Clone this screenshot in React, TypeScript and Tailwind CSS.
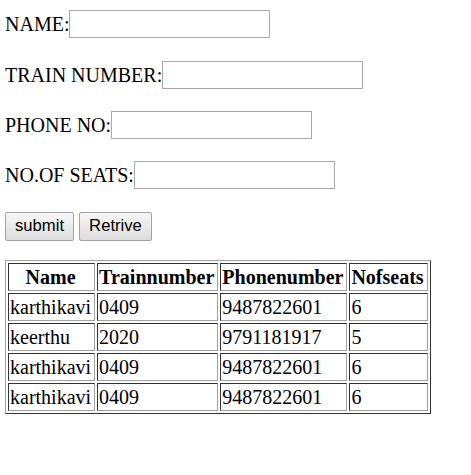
import React from "react";

const rows = [
  ["karthikavi", "0409", "9487822601", "6"],
  ["keerthu", "2020", "9791181917", "5"],
  ["karthikavi", "0409", "9487822601", "6"],
  ["karthikavi", "0409", "9487822601", "6"],
];

function Field({ label, className }: { label: string; className?: string }) {
  return (
    <div className={"flex items-center h-[28px] " + (className ?? "")}>
      <span className="leading-[23px]">{label}</span>
      <input
        type="text"
        className="w-[201px] h-[28px] border border-[#a9a9a9] bg-white outline-none"
      />
    </div>
  );
}

export default function App() {
  const serif = { fontFamily: '"Liberation Serif", "Times New Roman", serif' };
  return (
    <div
      className="bg-white text-black text-[20px] pl-[5px] pt-[10px] w-[471px] h-[475px]"
      style={serif}
    >
      <Field label="NAME:" />
      <Field label="TRAIN NUMBER:" className="mt-[23px]" />
      <Field label="PHONE NO:" className="mt-[22px]" />
      <Field label="NO.OF SEATS:" className="mt-[22px]" />
      <div className="flex gap-[5px] mt-[23px]">
        <button className="w-[69px] h-[29px] border border-[#a3a3a3] rounded-[2px] bg-linear-to-b from-[#f7f7f7] to-[#dddddd] text-[16.67px] font-['Liberation_Sans',Arial,sans-serif] leading-none">
          submit
        </button>
        <button className="w-[73px] h-[29px] border border-[#a3a3a3] rounded-[2px] bg-linear-to-b from-[#f7f7f7] to-[#dddddd] text-[16.67px] font-['Liberation_Sans',Arial,sans-serif] leading-none">
          Retrive
        </button>
      </div>
      <table className="mt-[19px] border-separate border-spacing-[2px] border-t border-l border-t-[#a0a0a0] border-l-[#a0a0a0] border-r border-b border-r-[#333333] border-b-[#333333]">
        <thead>
          <tr>
            {["Name", "Trainnumber", "Phonenumber", "Nofseats"].map((h) => (
              <th
                key={h}
                className="font-bold text-center leading-[24px] pl-[1px] pr-[3px] py-[1px] border-t border-l border-t-[#333333] border-l-[#333333] border-r border-b border-r-[#a0a0a0] border-b-[#a0a0a0]"
              >
                {h}
              </th>
            ))}
          </tr>
        </thead>
        <tbody>
          {rows.map((r, i) => (
            <tr key={i}>
              {r.map((c, j) => (
                <td
                  key={j}
                  className="text-left leading-[24px] pl-[1px] pr-[3px] py-[1px] border-t border-l border-t-[#333333] border-l-[#333333] border-r border-b border-r-[#a0a0a0] border-b-[#a0a0a0]"
                >
                  {c}
                </td>
              ))}
            </tr>
          ))}
        </tbody>
      </table>
    </div>
  );
}
